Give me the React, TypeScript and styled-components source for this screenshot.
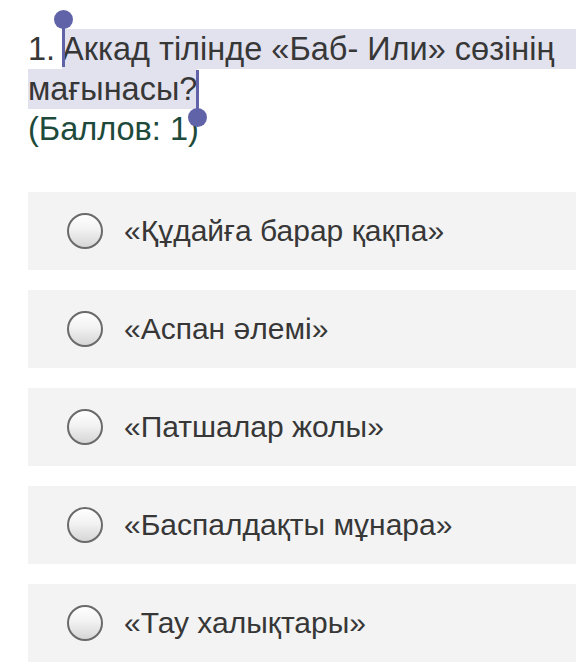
import styled, { createGlobalStyle } from "styled-components";

const GlobalStyle = createGlobalStyle`
  html, body {
    margin: 0;
    padding: 0;
    background: #ffffff;
  }
  body {
    font-family: "Liberation Sans", Arial, sans-serif;
  }
`;

const Page = styled.div`
  width: 576px;
  height: 667px;
  overflow: hidden;
  padding: 29px 0 0 28px;
  box-sizing: border-box;
`;

const Question = styled.div`
  font-size: 32.5px;
  line-height: 40px;
  color: #373737;
`;

const Line = styled.div`
  display: flex;
  white-space: nowrap;
`;

const Number = styled.span`
  padding-right: 7px;
`;

const Selected = styled.span<{ $fill?: boolean }>`
  position: relative;
  background: #e2e2ef;
  flex: ${(p) => (p.$fill ? 1 : "none")};
`;

const Handle = styled.span<{ $side: "start" | "end" }>`
  position: absolute;
  width: 3px;
  height: 48px;
  background: #6163a8;
  ${(p) => (p.$side === "start" ? "left: 0; top: -10px;" : "right: -2px; top: 1px;")}

  &::after {
    content: "";
    position: absolute;
    left: -8px;
    width: 19px;
    height: 19px;
    border-radius: 50%;
    background: #6163a8;
    ${(p) => (p.$side === "start" ? "top: -9px;" : "bottom: -9px;")}
  }
`;

const Points = styled.div`
  color: #1d4a3a;
`;

const Options = styled.div`
  display: flex;
  flex-direction: column;
  gap: 20px;
  margin-top: 43px;
`;

const Option = styled.label`
  display: flex;
  align-items: center;
  gap: 21px;
  height: 78px;
  padding-left: 39px;
  background: #f3f3f3;
  font-size: 30px;
  color: #373737;
`;

const Radio = styled.span`
  width: 32px;
  height: 32px;
  border-radius: 50%;
  border: 2px solid #6a6a6a;
  background: linear-gradient(180deg, #ffffff 0%, #f2f2f2 45%, #d6d6d6 100%);
  flex: none;
`;

const answers = [
  "«Құдайға барар қақпа»",
  "«Аспан әлемі»",
  "«Патшалар жолы»",
  "«Баспалдақты мұнара»",
  "«Тау халықтары»",
];

export default function App() {
  return (
    <Page>
      <GlobalStyle />
      <Question>
        <Line>
          <Number>1.</Number>
          <Selected $fill>
            <Handle $side="start" />
            Аккад тілінде «Баб- Или» сөзінің
          </Selected>
        </Line>
        <Line>
          <Selected>
            мағынасы?
            <Handle $side="end" />
          </Selected>
        </Line>
        <Points>(Баллов: 1)</Points>
      </Question>
      <Options>
        {answers.map((a) => (
          <Option key={a}>
            <Radio />
            {a}
          </Option>
        ))}
      </Options>
    </Page>
  );
}
